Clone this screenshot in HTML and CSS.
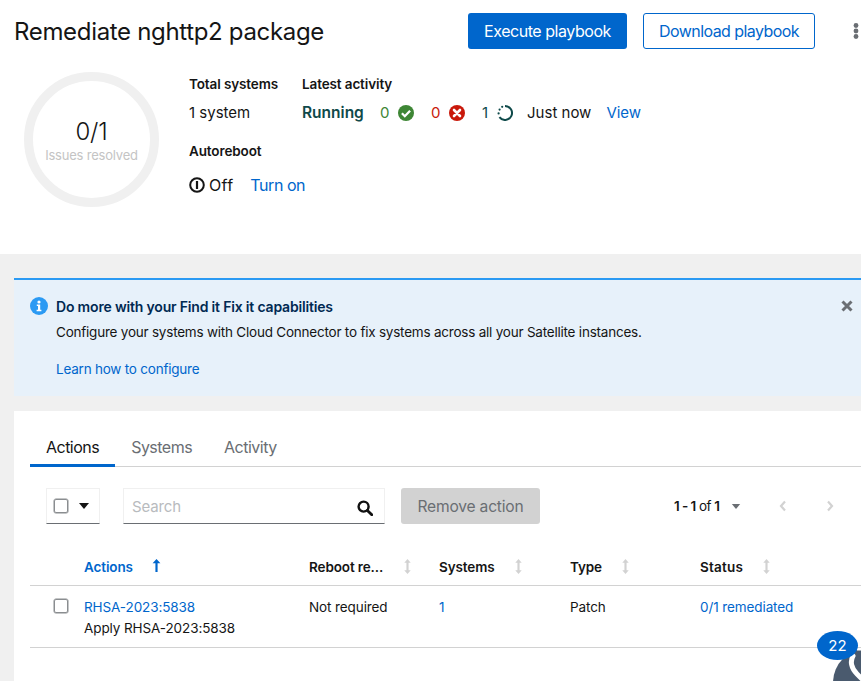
FILE: index.html
```html
<!DOCTYPE html>
<html lang="en">
<head>
<meta charset="utf-8">
<title>Remediate nghttp2 package</title>
<link rel="stylesheet" href="styles.css">
</head>
<body>
<header class="head">
  <div class="title-row">
    <h1 class="title">Remediate nghttp2 package</h1>
    <div class="actions">
      <button class="btn btn-primary">Execute playbook</button>
      <button class="btn btn-secondary">Download playbook</button>
      <span class="kebab"><svg width="8" height="16" viewBox="0 0 8 16"><circle cx="4" cy="2.5" r="2.4"/><circle cx="4" cy="8" r="2.4"/><circle cx="4" cy="13.5" r="2.4"/></svg></span>
    </div>
  </div>
  <div class="summary">
    <div class="donut">
      <span class="donut-value">0/1</span>
      <span class="donut-label">Issues resolved</span>
    </div>
    <div class="facts">
      <div class="fact-row">
        <div class="fact fact-total">
          <div class="fact-label">Total systems</div>
          <div class="fact-value">1 system</div>
        </div>
        <div class="fact">
          <div class="fact-label">Latest activity</div>
          <div class="fact-value activity">
            <span class="running">Running</span>
            <span class="count success">0 <svg class="ico" viewBox="0 0 16 16"><circle cx="8" cy="8" r="8" fill="#3e8635"/><path d="M3.9 8.3l2.9 2.9 5.3-5.4" fill="none" stroke="#fff" stroke-width="2.3"/></svg></span>
            <span class="count danger">0 <svg class="ico" viewBox="0 0 16 16"><circle cx="8" cy="8" r="8" fill="#c9190b"/><path d="M5 5l6 6M11 5l-6 6" fill="none" stroke="#fff" stroke-width="2.6" stroke-linecap="round"/></svg></span>
            <span class="count progress">1 <svg class="ico" viewBox="0 0 16 16"><path d="M8 1a7 7 0 1 1-5.6 11.2" fill="none" stroke="#0f4a4a" stroke-width="2"/><circle cx="1.6" cy="8.4" r="1.1" fill="#0f4a4a"/><circle cx="2.6" cy="4.6" r="1.1" fill="#0f4a4a"/><circle cx="5.2" cy="1.8" r="1.1" fill="#0f4a4a"/></svg></span>
            <span class="when">Just now</span>
            <a class="link">View</a>
          </div>
        </div>
      </div>
      <div class="fact fact-reboot">
        <div class="fact-label">Autoreboot</div>
        <div class="fact-value reboot-value">
          <svg class="power" viewBox="0 0 16 16"><circle cx="8" cy="8" r="6.8" fill="none" stroke="#151515" stroke-width="2"/><rect x="6.9" y="4" width="2.2" height="8" fill="#151515"/></svg>
          <span class="off">Off</span>
          <a class="link turn-on">Turn on</a>
        </div>
      </div>
    </div>
  </div>
</header>
<main class="content">
  <section class="alert">
    <svg class="alert-icon" viewBox="0 0 18 18"><circle cx="9" cy="9" r="9" fill="#2b9af3"/><circle cx="9" cy="5" r="1.6" fill="#fff"/><path d="M6.8 7.6h3.4v5.2h1.2v1.4H6.6v-1.4h1.4V9H6.8z" fill="#fff"/></svg>
    <div class="alert-body">
      <h2 class="alert-title">Do more with your Find it Fix it capabilities</h2>
      <p class="alert-text">Configure your systems with Cloud Connector to fix systems across all your Satellite instances.</p>
      <a class="link alert-link">Learn how to configure</a>
    </div>
    <svg class="alert-close" viewBox="0 0 12 12"><path d="M1.5 1.5l9 9M10.5 1.5l-9 9" stroke="#6a6e73" stroke-width="3" fill="none"/></svg>
  </section>
  <section class="card">
    <nav class="tabs">
      <span class="tab tab-active">Actions</span>
      <span class="tab">Systems</span>
      <span class="tab">Activity</span>
    </nav>
    <div class="toolbar">
      <div class="bulk">
        <span class="check"></span>
        <svg class="caret" viewBox="0 0 10 6"><path d="M0 0h10L5 6z" fill="#151515"/></svg>
      </div>
      <div class="search">
        <span class="placeholder">Search</span>
        <svg class="search-icon" viewBox="0 0 16 16"><circle cx="6.6" cy="6.6" r="5" fill="none" stroke="#111" stroke-width="2.4"/><path d="M10.4 10.4l4.4 4.4" stroke="#111" stroke-width="2.8" stroke-linecap="round"/></svg>
      </div>
      <button class="btn-disabled">Remove action</button>
      <div class="pager">
        <span class="pager-text"><b>1 - 1</b> of <b>1</b></span>
        <svg class="pager-caret" viewBox="0 0 10 6"><path d="M0 0h10L5 6z" fill="#6a6e73"/></svg>
        <svg class="pager-prev" viewBox="0 0 8 12"><path d="M6 1.5L2 6l4 4.5" fill="none" stroke="#d2d2d2" stroke-width="2.2"/></svg>
        <svg class="pager-next" viewBox="0 0 8 12"><path d="M2 1.5L6 6l-4 4.5" fill="none" stroke="#d2d2d2" stroke-width="2.2"/></svg>
      </div>
    </div>
    <table class="table">
      <colgroup>
        <col class="col-check"><col class="col-action"><col class="col-reboot"><col class="col-systems"><col class="col-type"><col class="col-status">
      </colgroup>
      <thead>
        <tr>
          <th></th>
          <th class="sorted"><span class="th-text">Actions</span><svg class="sort sort-up" viewBox="0 0 8 12"><path d="M4 0L7.6 4H5v8H3V4H.4z" fill="#06c"/></svg></th>
          <th><span class="th-text">Reboot re...</span><svg class="sort sort-wide" viewBox="0 0 8 14"><path d="M4 0l3 3.4H5v7.2h2L4 14l-3-3.4h2V3.4H1z" fill="#d2d2d2"/></svg></th>
          <th><span class="th-text">Systems</span><svg class="sort" viewBox="0 0 8 14"><path d="M4 0l3 3.4H5v7.2h2L4 14l-3-3.4h2V3.4H1z" fill="#d2d2d2"/></svg></th>
          <th><span class="th-text">Type</span><svg class="sort" viewBox="0 0 8 14"><path d="M4 0l3 3.4H5v7.2h2L4 14l-3-3.4h2V3.4H1z" fill="#d2d2d2"/></svg></th>
          <th><span class="th-text th-status">Status</span><svg class="sort" viewBox="0 0 8 14"><path d="M4 0l3 3.4H5v7.2h2L4 14l-3-3.4h2V3.4H1z" fill="#d2d2d2"/></svg></th>
        </tr>
      </thead>
      <tbody>
        <tr>
          <td><span class="check check-row"></span></td>
          <td><a class="link">RHSA-2023:5838</a><div class="sub">Apply RHSA-2023:5838</div></td>
          <td>Not required</td>
          <td><a class="link">1</a></td>
          <td>Patch</td>
          <td><a class="link">0/1 remediated</a></td>
        </tr>
      </tbody>
    </table>
  </section>
</main>
<div class="chat">
  <svg class="chat-icon" viewBox="0 0 70 70"><circle cx="35" cy="35" r="35" fill="#4a5a6e"/><path d="M20 8c-3 5-2 12 4 18l7 7" fill="none" stroke="#fff" stroke-width="5" stroke-linecap="round"/><path d="M24 1h10" stroke="#fff" stroke-width="3"/></svg>
  <span class="chat-badge">22</span>
</div>
</body>
</html>
```
FILE: styles.css
```css
* { box-sizing: border-box; }
html, body { margin: 0; height: 681px; overflow: hidden; }
body { background: #f0f0f0; color: #151515; font: 14px/21px Inter, "Noto Sans", sans-serif; letter-spacing: -0.15px; position: relative; }
a.link { color: #06c; }
.head { background: #fff; height: 254px; padding: 13px 0 0 14px; }
.title-row { display: flex; justify-content: space-between; height: 36px; align-items: center; }
.title { margin: 0; font-size: 24px; font-weight: 400; letter-spacing: -0.33px; line-height: 36px; position: relative; top: 1px; }
.actions { display: flex; align-items: center; }
.btn { height: 36px; border-radius: 3px; font: 16px/24px Inter, sans-serif; letter-spacing: -0.45px; padding: 0; margin-right: 16px; }
.btn-primary { width: 159px; background: #06c; color: #fff; border: 0; }
.btn-secondary { width: 172px; background: #fff; color: #06c; border: 1px solid #06c; margin-right: 37px; letter-spacing: -0.56px; }
.kebab { width: 9px; display: flex; }
.kebab svg { fill: #6a6e73; }
.summary { display: flex; margin: 23px 0 0 10px; }
.donut { width: 135px; height: 135px; border: 9px solid #f0f0f0; border-radius: 50%; display: flex; flex-direction: column; align-items: center; padding-top: 36px; }
.donut-value { font-size: 24px; line-height: 30px; font-weight: 300; }
.donut-label { font-size: 13px; line-height: 16px; color: #c4c4c4; white-space: nowrap; letter-spacing: -0.2px; }
.facts { margin: 2px 0 0 30px; }
.fact-row { display: flex; }
.fact-total { width: 113px; }
.fact-label { font-weight: 600; font-size: 13.5px; line-height: 20px; letter-spacing: -0.12px; }
.fact-value { font-size: 15px; line-height: 24px; margin-top: 7px; letter-spacing: 0; }
.activity { display: flex; align-items: center; white-space: nowrap; }
.running { color: #0f4a4a; font-weight: 600; width: 78px; font-size: 15.5px; }
.count { display: flex; align-items: center; gap: 9px; margin-right: 16.5px; }
.ico { width: 16px; height: 16px; }
.success { color: #3e8635; }
.danger { color: #c9190b; }
.progress { color: #0f4a4a; }
.when { margin: 0 15px 0 -2.5px; }
.fact-reboot { margin-top: 16px; }
.reboot-value { display: flex; align-items: center; margin-top: 12px; }
.power { width: 16px; height: 16px; margin-right: 4px; }
.off { font-size: 16px; letter-spacing: 0.3px; }
.turn-on { margin-left: 17px; font-size: 16px; letter-spacing: -0.45px; }
.content { padding: 24px 0 0 14px; }
.alert { height: 118px; background: #e7f1fa; border-top: 2px solid #2b9af3; padding: 17px 0 0 16px; display: flex; position: relative; }
.alert-icon { width: 18px; height: 18px; flex: none; }
.alert-body { margin-left: 8px; }
.alert-title { margin: 0; font-size: 14px; font-weight: 600; line-height: 20px; color: #002952; letter-spacing: -0.18px; }
.alert-text { margin: 5px 0 0; font-size: 13.5px; line-height: 20px; letter-spacing: -0.22px; }
.alert-link { display: block; margin-top: 17px; font-size: 13.5px; line-height: 20px; letter-spacing: -0.22px; }
.alert-close { position: absolute; top: 20px; right: 8px; width: 12px; height: 12px; }
.card { background: #fff; margin-top: 15px; height: 270px; padding: 19px 0 0 16px; }
.tabs { display: flex; border-bottom: 1px solid #d2d2d2; height: 37px; }
.tab { padding: 7px 16px 0; font-size: 16px; line-height: 21px; color: #6a6e73; height: 37px; letter-spacing: -0.52px; }
.tab-active { color: #151515; border-bottom: 3px solid #06c; }
.toolbar { display: flex; align-items: flex-start; margin: 21px 0 0 16px; position: relative; }
.bulk { width: 54px; height: 36px; border: 1px solid #f0f0f0; border-bottom-color: #6a6e73; display: flex; align-items: center; padding-left: 7px; }
.check { display: block; width: 14px; height: 14px; border: 1px solid #8a8d90; border-radius: 2px; box-shadow: 0 0 0 .5px #8a8d90; }
.caret { width: 10px; height: 6px; margin-left: 11px; }
.search { width: 262px; height: 36px; margin-left: 23px; border: 1px solid #f0f0f0; border-bottom-color: #6a6e73; display: flex; align-items: center; justify-content: space-between; padding: 0 11px 0 8px; }
.placeholder { color: #b8bbbe; font-size: 15px; }
.search-icon { width: 16px; height: 16px; margin-top: 3px; }
.btn-disabled { width: 139px; height: 36px; margin-left: 16px; background: #d2d2d2; color: #6a6e73; border: 0; border-radius: 3px; font: 15.6px/26px Inter, sans-serif; letter-spacing: -0.2px; padding: 2px 0 0; }
.pager { display: flex; align-items: center; height: 36px; margin-left: 134px; }
.pager-text { font-size: 13.5px; white-space: nowrap; letter-spacing: -0.55px; }
.pager-text b { font-weight: 600; }
.pager-caret { width: 10px; height: 5px; margin-left: 12px; }
.pager-prev, .pager-next { width: 8px; height: 12px; }
.pager-prev { margin-left: 38px; }
.pager-next { margin-left: 39px; }
.table { border-collapse: collapse; table-layout: fixed; width: 831px; margin-top: 24px; }
.col-check { width: 54px; }
.col-action { width: 225px; }
.col-reboot { width: 130px; }
.col-systems { width: 131px; }
.col-type { width: 130px; }
.col-status { width: 161px; }
th { height: 37px; text-align: left; padding: 2px 0 0; font-size: 13.5px; font-weight: 600; border-bottom: 1px solid #d2d2d2; white-space: nowrap; vertical-align: middle; letter-spacing: -0.12px; }
.th-status { letter-spacing: 0.2px; }
.sorted { color: #06c; }
.sort { width: 9px; height: 15px; vertical-align: -2px; margin-left: 19px; }
.sort-wide { margin-left: 20px; }
.sort-up { margin-left: 19px; height: 13px; vertical-align: 0; }
td { padding: 11px 0 8px; font-size: 13.5px; line-height: 21px; vertical-align: top; border-bottom: 1px solid #d2d2d2; height: 61px; letter-spacing: -0.1px; }
.check-row { margin: 2px 0 0 24px; }
.chat { position: absolute; right: 0; bottom: 0; width: 44px; height: 50px; overflow: hidden; }
.chat-icon { position: absolute; left: 16px; top: 17px; width: 70px; height: 70px; }
.chat-badge { position: absolute; left: 0; top: 0; width: 41px; height: 29px; background: #06c; color: #fff; border-radius: 50%; font-size: 15px; line-height: 29px; text-align: center; letter-spacing: 0.2px; }
```
